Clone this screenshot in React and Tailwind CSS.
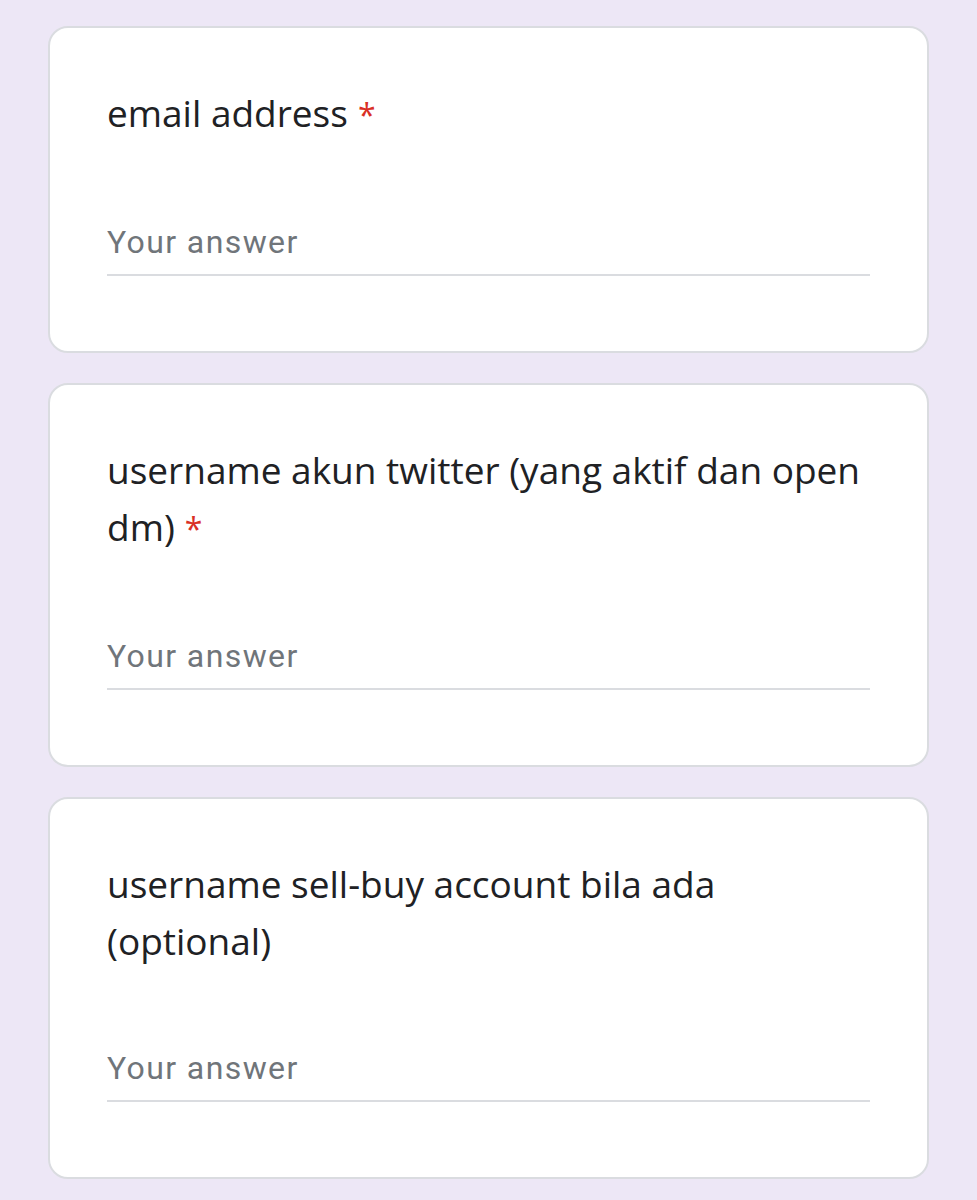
const questions = [
  { id: "email", label: "email address", required: true },
  { id: "twitter", label: "username akun twitter (yang aktif dan open dm)", required: true },
  { id: "sellbuy", label: "username sell-buy account bila ada (optional)", required: false },
];

const QuestionCard = ({ label, required }) => (
  <div className="rounded-[20px] border-2 border-[#dadce0] bg-white px-[57px] pb-[75px] pt-[56px]">
    <div className="font-['Open_Sans',sans-serif] text-[37px] leading-[57px] text-[#202124]">
      {label}
      {required && <span className="ml-[10px] text-[32px] text-[#d93025]">*</span>}
    </div>
    <div className="mt-[79px] border-b-2 border-[#dadce0] pb-[12px]">
      <input
        placeholder="Your answer"
        className="w-full bg-transparent font-['Roboto',sans-serif] text-[32px] leading-[40px] tracking-[1.4px] text-[#202124] outline-none placeholder:text-[#70757a]"
      />
    </div>
  </div>
);

export default function App() {
  return (
    <div className="min-h-[1200px] bg-[#ede7f6] px-[48px] pt-[26px]">
      <div className="flex flex-col gap-[30px]">
        {questions.map((q) => (
          <QuestionCard key={q.id} {...q} />
        ))}
      </div>
    </div>
  );
}
